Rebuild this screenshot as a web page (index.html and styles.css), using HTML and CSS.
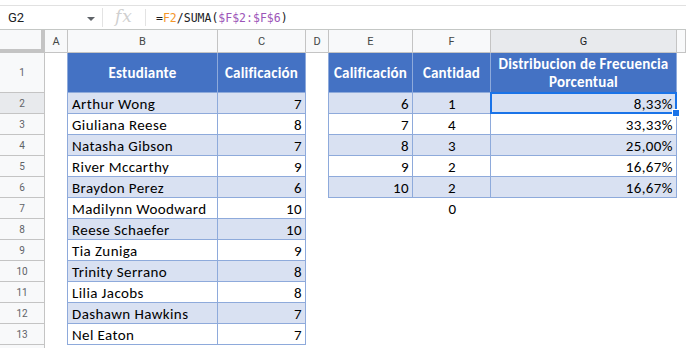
FILE: index.html
```html
<!DOCTYPE html>
<html lang="es">
<head>
    <meta charset="UTF-8">
    <title>Distribucion de Frecuencia</title>
    <link rel="stylesheet" href="styles.css">
</head>
<body>
    <div class="topbar">
        <div class="namebox">
            <span class="cellref">G2</span>
            <span class="caret"></span>
        </div>
        <div class="fx">fx</div>
        <div class="formula">=<span class="ref-a">F2</span>/SUMA(<span class="ref-b">$F$2:$F$6</span>)</div>
    </div>

    <div class="sheet">
        <div class="row colheads">
            <div class="corner"></div>
            <div class="ch">A</div>
            <div class="ch">B</div>
            <div class="ch">C</div>
            <div class="ch">D</div>
            <div class="ch">E</div>
            <div class="ch">F</div>
            <div class="ch sel">G</div>
            <div class="ch"></div>
        </div>

        <div class="row tall">
            <div class="rh">1</div>
            <div class="c edge"></div>
            <div class="c th">Estudiante</div>
            <div class="c th">Calificación</div>
            <div class="c edge"></div>
            <div class="c th">Calificación</div>
            <div class="c th">Cantidad</div>
            <div class="c th">Distribucion de Frecuencia Porcentual</div>
            <div class="c"></div>
        </div>

        <div class="row">
            <div class="rh sel">2</div>
            <div class="c edge"></div>
            <div class="c td band">Arthur Wong</div>
            <div class="c td band num">7</div>
            <div class="c edge"></div>
            <div class="c td band num">6</div>
            <div class="c td band mid">1</div>
            <div class="c td band num active">8,33%<span class="handle"></span></div>
            <div class="c"></div>
        </div>
        <div class="row">
            <div class="rh">3</div>
            <div class="c edge"></div>
            <div class="c td">Giuliana Reese</div>
            <div class="c td num">8</div>
            <div class="c edge"></div>
            <div class="c td num">7</div>
            <div class="c td mid">4</div>
            <div class="c td num">33,33%</div>
            <div class="c"></div>
        </div>
        <div class="row">
            <div class="rh">4</div>
            <div class="c edge"></div>
            <div class="c td band">Natasha Gibson</div>
            <div class="c td band num">7</div>
            <div class="c edge"></div>
            <div class="c td band num">8</div>
            <div class="c td band mid">3</div>
            <div class="c td band num">25,00%</div>
            <div class="c"></div>
        </div>
        <div class="row">
            <div class="rh">5</div>
            <div class="c edge"></div>
            <div class="c td">River Mccarthy</div>
            <div class="c td num">9</div>
            <div class="c edge"></div>
            <div class="c td num">9</div>
            <div class="c td mid">2</div>
            <div class="c td num">16,67%</div>
            <div class="c"></div>
        </div>
        <div class="row">
            <div class="rh">6</div>
            <div class="c edge"></div>
            <div class="c td band">Braydon Perez</div>
            <div class="c td band num">6</div>
            <div class="c edge"></div>
            <div class="c td band num">10</div>
            <div class="c td band mid">2</div>
            <div class="c td band num">16,67%</div>
            <div class="c"></div>
        </div>
        <div class="row">
            <div class="rh">7</div>
            <div class="c edge"></div>
            <div class="c td">Madilynn Woodward</div>
            <div class="c td num">10</div>
            <div class="c"></div>
            <div class="c"></div>
            <div class="c mid">0</div>
            <div class="c"></div>
            <div class="c"></div>
        </div>
        <div class="row">
            <div class="rh">8</div>
            <div class="c edge"></div>
            <div class="c td band">Reese Schaefer</div>
            <div class="c td band num">10</div>
            <div class="c"></div><div class="c"></div><div class="c"></div><div class="c"></div><div class="c"></div>
        </div>
        <div class="row">
            <div class="rh">9</div>
            <div class="c edge"></div>
            <div class="c td">Tia Zuniga</div>
            <div class="c td num">9</div>
            <div class="c"></div><div class="c"></div><div class="c"></div><div class="c"></div><div class="c"></div>
        </div>
        <div class="row">
            <div class="rh">10</div>
            <div class="c edge"></div>
            <div class="c td band">Trinity Serrano</div>
            <div class="c td band num">8</div>
            <div class="c"></div><div class="c"></div><div class="c"></div><div class="c"></div><div class="c"></div>
        </div>
        <div class="row">
            <div class="rh">11</div>
            <div class="c edge"></div>
            <div class="c td">Lilia Jacobs</div>
            <div class="c td num">8</div>
            <div class="c"></div><div class="c"></div><div class="c"></div><div class="c"></div><div class="c"></div>
        </div>
        <div class="row">
            <div class="rh">12</div>
            <div class="c edge"></div>
            <div class="c td band">Dashawn Hawkins</div>
            <div class="c td band num">7</div>
            <div class="c"></div><div class="c"></div><div class="c"></div><div class="c"></div><div class="c"></div>
        </div>
        <div class="row">
            <div class="rh">13</div>
            <div class="c edge"></div>
            <div class="c td">Nel Eaton</div>
            <div class="c td num">7</div>
            <div class="c"></div><div class="c"></div><div class="c"></div><div class="c"></div><div class="c"></div>
        </div>
        <div class="row">
            <div class="rh"></div>
            <div class="c"></div><div class="c"></div><div class="c"></div><div class="c"></div><div class="c"></div><div class="c"></div><div class="c"></div><div class="c"></div>
        </div>
    </div>
</body>
</html>
```

FILE: styles.css
```css
body {
    margin: 0;
    background: #ffffff;
    font-family: Roboto, Arial, sans-serif;
    overflow: hidden;
}

/* Formula bar */
.topbar {
    margin-top: 5px;
    height: 23px;
    border-top: 1px solid #e1e1e1;
    display: flex;
    align-items: center;
}
.namebox {
    width: 103px;
    height: 19px;
    box-sizing: border-box;
    padding: 0 7px 0 8px;
    display: flex;
    align-items: center;
    justify-content: space-between;
    border-right: 1px solid #e3e3e3;
}
.cellref {
    font-size: 13px;
    color: #202124;
}
.caret {
    width: 0;
    height: 0;
    border-left: 4px solid transparent;
    border-right: 4px solid transparent;
    border-top: 4px solid #5f6368;
    margin-top: 2px;
}
.fx {
    width: 43px;
    height: 17px;
    box-sizing: border-box;
    border-right: 1px solid #e3e3e3;
    padding-left: 12px;
    font-family: "DejaVu Serif", "Liberation Serif", serif;
    font-style: italic;
    font-size: 17px;
    line-height: 15px;
    color: #d0d0d0;
    letter-spacing: 1px;
}
.formula {
    padding-left: 10px;
    font-family: "DejaVu Sans Mono", "Liberation Mono", monospace;
    font-size: 11.5px;
    color: #202124;
}
.ref-a {
    color: #f4962a;
}
.ref-b {
    color: #9c55b8;
}

/* Grid */
.sheet {
    border-top: 1px solid #c4c7c5;
}
.row {
    display: grid;
    grid-template-columns: 45px 23px 150px 88px 23px 84px 78px 186px 1fr;
    height: 21px;
}
.row.tall {
    height: 40px;
}
.row.colheads {
    height: 23px;
}
.row > div {
    box-sizing: border-box;
}
.corner {
    background: #f8f9fa;
    border-right: 4px solid #c4c4c4;
    border-bottom: 4px solid #c4c4c4;
}
.ch {
    background: #f8f9fa;
    border-right: 1px solid #c4c4c4;
    border-bottom: 1px solid #c4c4c4;
    font-size: 11px;
    color: #444746;
    display: flex;
    align-items: center;
    justify-content: center;
}
.ch.sel {
    background: #e8eaed;
    color: #202124;
}
.rh {
    background: #f8f9fa;
    border-right: 1px solid #c4c4c4;
    border-bottom: 1px solid #c4c4c4;
    font-size: 10px;
    color: #5f6368;
    display: flex;
    align-items: center;
    justify-content: center;
}
.rh.sel {
    background: #e8eaed;
}

/* Cells */
.c {
    font-family: Calibri, Carlito, Lato, "Open Sans", sans-serif;
    font-size: 15px;
    color: #000000;
    display: flex;
    align-items: center;
    padding: 1px 3px 0 4px;
    white-space: nowrap;
    letter-spacing: 0.4px;
}
.c.edge {
    border-right: 1px solid #8eaadb;
}
.td {
    border-right: 1px solid #8eaadb;
    border-bottom: 1px solid #8eaadb;
}
.td.band {
    background: #d9e1f2;
}
.th {
    background: #4472c4;
    color: #ffffff;
    font-weight: bold;
    justify-content: center;
    text-align: center;
    white-space: normal;
    line-height: 18px;
    letter-spacing: 0.2px;
    border-right: 1px solid #8eaadb;
    border-bottom: 1px solid #8eaadb;
    padding: 0 2px;
}
.num {
    justify-content: flex-end;
}
.mid {
    justify-content: center;
}

/* Selected cell */
.active {
    position: relative;
}
.active::after {
    content: "";
    position: absolute;
    left: -1px;
    top: -1px;
    right: -1px;
    bottom: -1px;
    border: 2px solid #1a73e8;
}
.handle {
    position: absolute;
    right: -4px;
    bottom: -4px;
    width: 6px;
    height: 6px;
    background: #1a73e8;
    border: 1px solid #ffffff;
    z-index: 2;
}
```
